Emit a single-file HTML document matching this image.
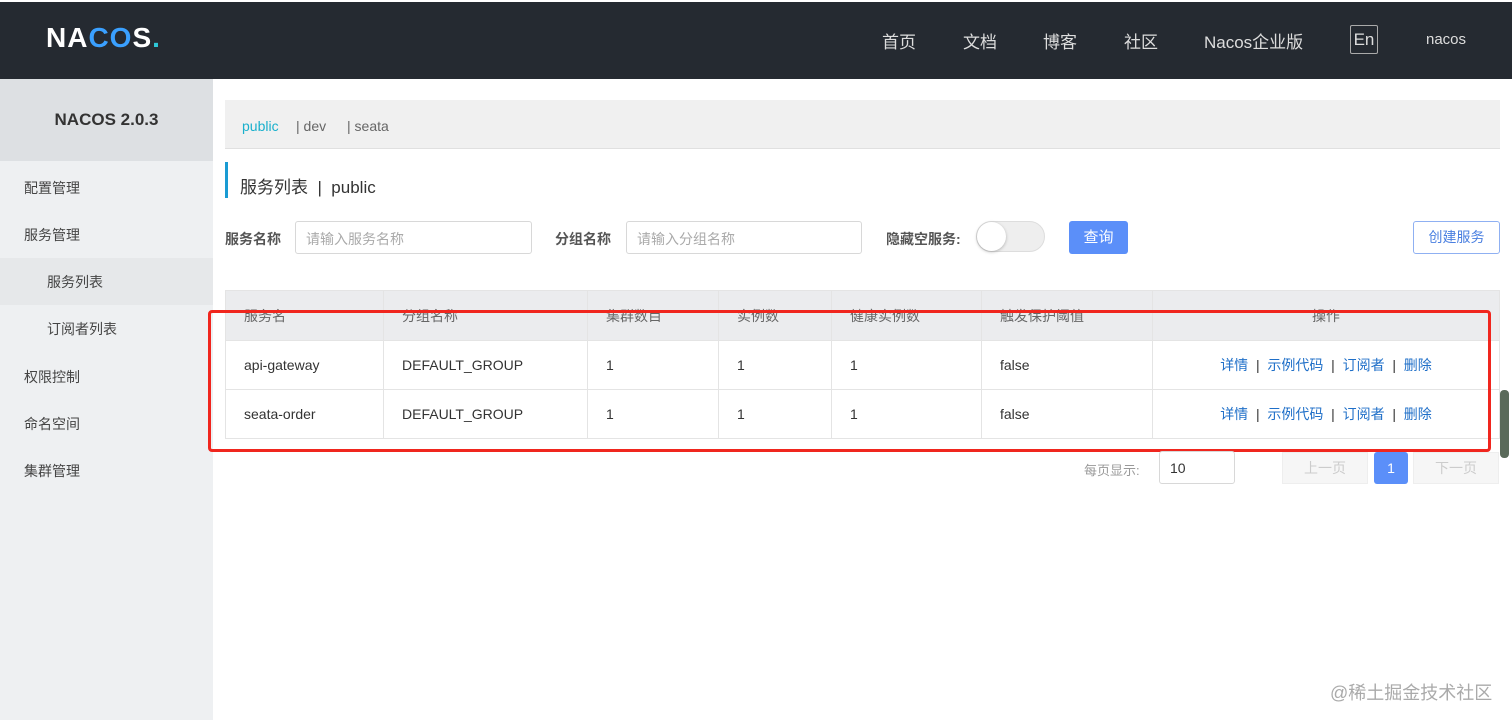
<!DOCTYPE html>
<html><head><meta charset="utf-8"><style>
*{box-sizing:border-box;margin:0;padding:0}
body{width:1512px;height:720px;overflow:hidden;background:#fff;font-family:"Liberation Sans","Noto Sans CJK SC",sans-serif;color:#333;position:relative;font-size:14px}
.abs{position:absolute}
.top{left:0;top:0;width:1512px;height:79px;background:#252a31;border-top:2px solid #fff}
.nav{top:28px;color:#ddd;font-size:17px}
.side{left:0;top:79px;width:213px;height:641px;background:#eef0f2}
.sidehead{left:0;top:79px;width:213px;height:82px;background:#dde0e3;text-align:center;line-height:82px;font-weight:bold;font-size:17px;color:#333}
.mi{left:24px;font-size:14px;color:#444}
th,td{text-align:left;font-weight:normal;font-size:14px;border-right:1px solid #e4e4e4;border-bottom:1px solid #e4e4e4;padding-left:18px}
th{background:#ebecee;height:50px;color:#666}
td{height:49px;color:#333}
a{color:#1f6fc8;text-decoration:none}
</style></head><body>
<div class="abs top"></div>
<div class="abs" style="left:46px;top:22px;font-size:28px;font-weight:bold;color:#fff;letter-spacing:1px">NA<span style="color:#3aa0ff">CO</span>S<span style="color:#2ec8d8">.</span></div>
<div class="abs nav" style="left:882px">首页</div>
<div class="abs nav" style="left:963px">文档</div>
<div class="abs nav" style="left:1043px">博客</div>
<div class="abs nav" style="left:1124px">社区</div>
<div class="abs nav" style="left:1204px">Nacos企业版</div>
<div class="abs" style="left:1350px;top:25px;width:28px;height:29px;border:1px solid #aaa;border-radius:2px;color:#ddd;font-size:17px;text-align:center;line-height:27px">En</div>
<div class="abs nav" style="left:1426px;top:31px;font-size:15px">nacos</div>

<div class="abs side"></div>
<div class="abs sidehead">NACOS 2.0.3</div>
<div class="abs mi" style="top:178px">配置管理</div>
<div class="abs mi" style="top:225px">服务管理</div>
<div class="abs" style="left:0;top:258px;width:213px;height:47px;background:#e6e8ea"></div>
<div class="abs mi" style="left:47px;top:272px">服务列表</div>
<div class="abs mi" style="left:47px;top:319px">订阅者列表</div>
<div class="abs mi" style="top:367px">权限控制</div>
<div class="abs mi" style="top:414px">命名空间</div>
<div class="abs mi" style="top:461px">集群管理</div>

<div class="abs" style="left:225px;top:100px;width:1275px;height:49px;background:#f0f0f0;border-bottom:1px solid #e0e0e0"></div>
<div class="abs" style="left:242px;top:118px;color:#1ab0cc">public</div>
<div class="abs" style="left:296px;top:118px;color:#666">| dev</div>
<div class="abs" style="left:347px;top:118px;color:#666">| seata</div>
<div class="abs" style="left:225px;top:162px;width:3px;height:36px;background:#1a9bd3"></div>
<div class="abs" style="left:240px;top:173px;font-size:17px;color:#333">服务列表 &nbsp;|&nbsp; public</div>

<div class="abs" style="left:225px;top:229px;font-weight:bold;color:#555">服务名称</div>
<div class="abs" style="left:295px;top:221px;width:237px;height:33px;border:1px solid #d8d8d8;border-radius:3px;color:#aaa;padding:7px 10px">请输入服务名称</div>
<div class="abs" style="left:555px;top:229px;font-weight:bold;color:#555">分组名称</div>
<div class="abs" style="left:626px;top:221px;width:236px;height:33px;border:1px solid #d8d8d8;border-radius:3px;color:#aaa;padding:7px 10px">请输入分组名称</div>
<div class="abs" style="left:886px;top:229px;font-weight:bold;color:#555">隐藏空服务:</div>
<div class="abs" style="left:976px;top:221px;width:69px;height:31px;border-radius:16px;background:#eee;border:1px solid #ddd"></div>
<div class="abs" style="left:977px;top:222px;width:29px;height:29px;border-radius:50%;background:#fff;box-shadow:0 1px 3px rgba(0,0,0,.25)"></div>
<div class="abs" style="left:1069px;top:221px;width:59px;height:33px;border-radius:3px;background:#5b8ff9;color:#fff;text-align:center;line-height:33px;font-size:15px">查询</div>
<div class="abs" style="left:1413px;top:221px;width:87px;height:33px;border-radius:3px;border:1px solid #8fb0f2;color:#4a7fe0;text-align:center;line-height:31px;font-size:14px">创建服务</div>

<table class="abs" style="left:225px;top:290px;width:1275px;border-collapse:collapse;border-left:1px solid #e4e4e4;border-top:1px solid #e4e4e4">
<tr><th style="width:158px">服务名</th><th style="width:204px">分组名称</th><th style="width:131px">集群数目</th><th style="width:113px">实例数</th><th style="width:150px">健康实例数</th><th style="width:171px">触发保护阈值</th><th style="text-align:center;padding:0">操作</th></tr>
<tr><td>api-gateway</td><td>DEFAULT_GROUP</td><td>1</td><td>1</td><td>1</td><td>false</td><td style="text-align:center;padding:0"><a>详情</a> &nbsp;|&nbsp; <a>示例代码</a> &nbsp;|&nbsp; <a>订阅者</a> &nbsp;|&nbsp; <a>删除</a></td></tr>
<tr><td>seata-order</td><td>DEFAULT_GROUP</td><td>1</td><td>1</td><td>1</td><td>false</td><td style="text-align:center;padding:0"><a>详情</a> &nbsp;|&nbsp; <a>示例代码</a> &nbsp;|&nbsp; <a>订阅者</a> &nbsp;|&nbsp; <a>删除</a></td></tr>
</table>
<div class="abs" style="left:208px;top:310px;width:1283px;height:142px;border:3px solid #f0261e;border-radius:4px"></div>
<div class="abs" style="left:1500px;top:390px;width:9px;height:68px;background:#5a6a5a;border-radius:4px"></div>

<div class="abs" style="left:1084px;top:460px;color:#999;font-size:13px">每页显示:</div>
<div class="abs" style="left:1159px;top:451px;width:76px;height:33px;border:1px solid #d8d8d8;border-radius:3px;padding:8px 10px">10</div>
<div class="abs" style="left:1282px;top:452px;width:86px;height:32px;background:#f6f6f6;border:1px solid #eee;color:#ccc;text-align:center;line-height:30px">上一页</div>
<div class="abs" style="left:1374px;top:452px;width:34px;height:32px;background:#5b8ff9;color:#fff;border-radius:3px;text-align:center;line-height:32px">1</div>
<div class="abs" style="left:1413px;top:452px;width:86px;height:32px;background:#f6f6f6;border:1px solid #eee;color:#ccc;text-align:center;line-height:30px">下一页</div>
<div class="abs" style="left:1330px;top:679px;color:#aaa;font-size:18px">@稀土掘金技术社区</div>
</body></html>
